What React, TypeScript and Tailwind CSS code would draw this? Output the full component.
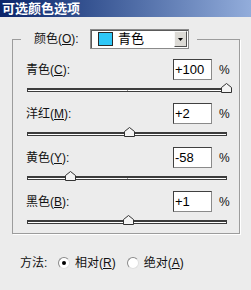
import React from "react";

const FONT = '"Liberation Sans", "Noto Sans CJK SC", sans-serif';

function Thumb() {
  return (
    <svg width="11" height="10" viewBox="0 0 11 10" className="block">
      <polygon points="0.5,9.5 0.5,4.5 5.5,0.5 10.5,4.5 10.5,9.5" fill="#f4f4f4" stroke="#333333" strokeWidth="1" />
    </svg>
  );
}

function Slider({ value }: { value: number }) {
  const left = 100 + value * 0.99;
  return (
    <div className="relative h-[21px]">
      <div className="absolute left-[14px] top-[8px] w-[200px] h-[4px] bg-white border border-[#3c3c3c] border-t-2" />
      <div className="absolute left-[114px] top-[10px] w-[1px] h-[1px] bg-[#9a9a9a]" />
      <div className="absolute top-[3px]" style={{ left: 14 + left - 5 }}>
        <Thumb />
      </div>
    </div>
  );
}

function Row({ label, hot, value, slider }: { label: string; hot: string; value: string; slider: number }) {
  return (
    <div className="flex flex-col">
      <div className="flex items-center h-[21px]">
        <div className="flex-1 pl-[13px] text-[12px] text-[#111]">
          {label}(<u>{hot}</u>):
        </div>
        <div className="w-[39px] h-[21px] bg-white border border-[#8a8a8a] border-t-[#404040] border-l-[#404040] flex items-center pl-[1px] text-[13px] text-black">
          {value}
        </div>
        <div className="w-[27px] pl-[7px] text-[12px] text-[#111]">%</div>
      </div>
      <Slider value={slider} />
    </div>
  );
}

function Radio({ checked }: { checked: boolean }) {
  return (
    <div className="w-[12px] h-[12px] rounded-full bg-white border border-[#8a8a8a] border-b-[#e0e0e0] border-r-[#e0e0e0] flex items-center justify-center">
      {checked && <div className="w-[4px] h-[4px] rounded-full bg-black" />}
    </div>
  );
}

export default function App() {
  return (
    <div className="w-[251px] h-[290px] bg-[#ececec] flex flex-col overflow-hidden" style={{ fontFamily: FONT }}>
      <div className="h-[17px] bg-gradient-to-r from-[#0a246a] to-[#93addb] flex items-center pl-[2px]">
        <span className="text-white font-bold text-[13px] leading-none">可选颜色选项</span>
      </div>

      <fieldset className="ml-[12px] mt-[12px] w-[228px] border border-[#9c9c9c] shadow-[1px_1px_0_#ffffff]">
        <legend className="ml-[8px] pl-[13px] pr-[8px] h-[20px]">
          <div className="flex items-center h-[20px]">
            <div className="w-[56px] text-[12px] text-[#111]">
              颜色(<u>O</u>):
            </div>
            <div className="w-[99px] h-[20px] bg-white border border-[#8a8a8a] shadow-[inset_1px_1px_0_#5a5a5a] flex items-center">
              <div className="ml-[7px] w-[15px] h-[14px] bg-[#2ec7f7] border border-[#2a2a2a]" />
              <span className="ml-[5px] text-[13px] text-black">青色</span>
              <div className="ml-auto mr-[1px] w-[13px] h-[16px] bg-[#dcdad5] border border-[#f8f8f8] border-b-[#505050] border-r-[#505050] flex items-center justify-center">
                <svg width="5" height="3" viewBox="0 0 5 3" className="block">
                  <polygon points="0,0 5,0 2.5,3" fill="#000" />
                </svg>
              </div>
            </div>
          </div>
        </legend>
        <div className="flex flex-col gap-[2px] mt-[10px]">
          <Row label="青色" hot="C" value="+100" slider={100} />
          <Row label="洋红" hot="M" value="+2" slider={2} />
          <Row label="黄色" hot="Y" value="-58" slider={-58} />
          <Row label="黑色" hot="B" value="+1" slider={1} />
        </div>
      </fieldset>

      <div className="mt-[21px] h-[16px] flex items-center pl-[20px] text-[12px] text-[#111]">
        <span className="w-[38px]">方法:</span>
        <Radio checked={true} />
        <span className="ml-[5px]">
          相对(<u>R</u>)
        </span>
        <span className="ml-[11px]">
          <Radio checked={false} />
        </span>
        <span className="ml-[5px]">
          绝对(<u>A</u>)
        </span>
      </div>
    </div>
  );
}
